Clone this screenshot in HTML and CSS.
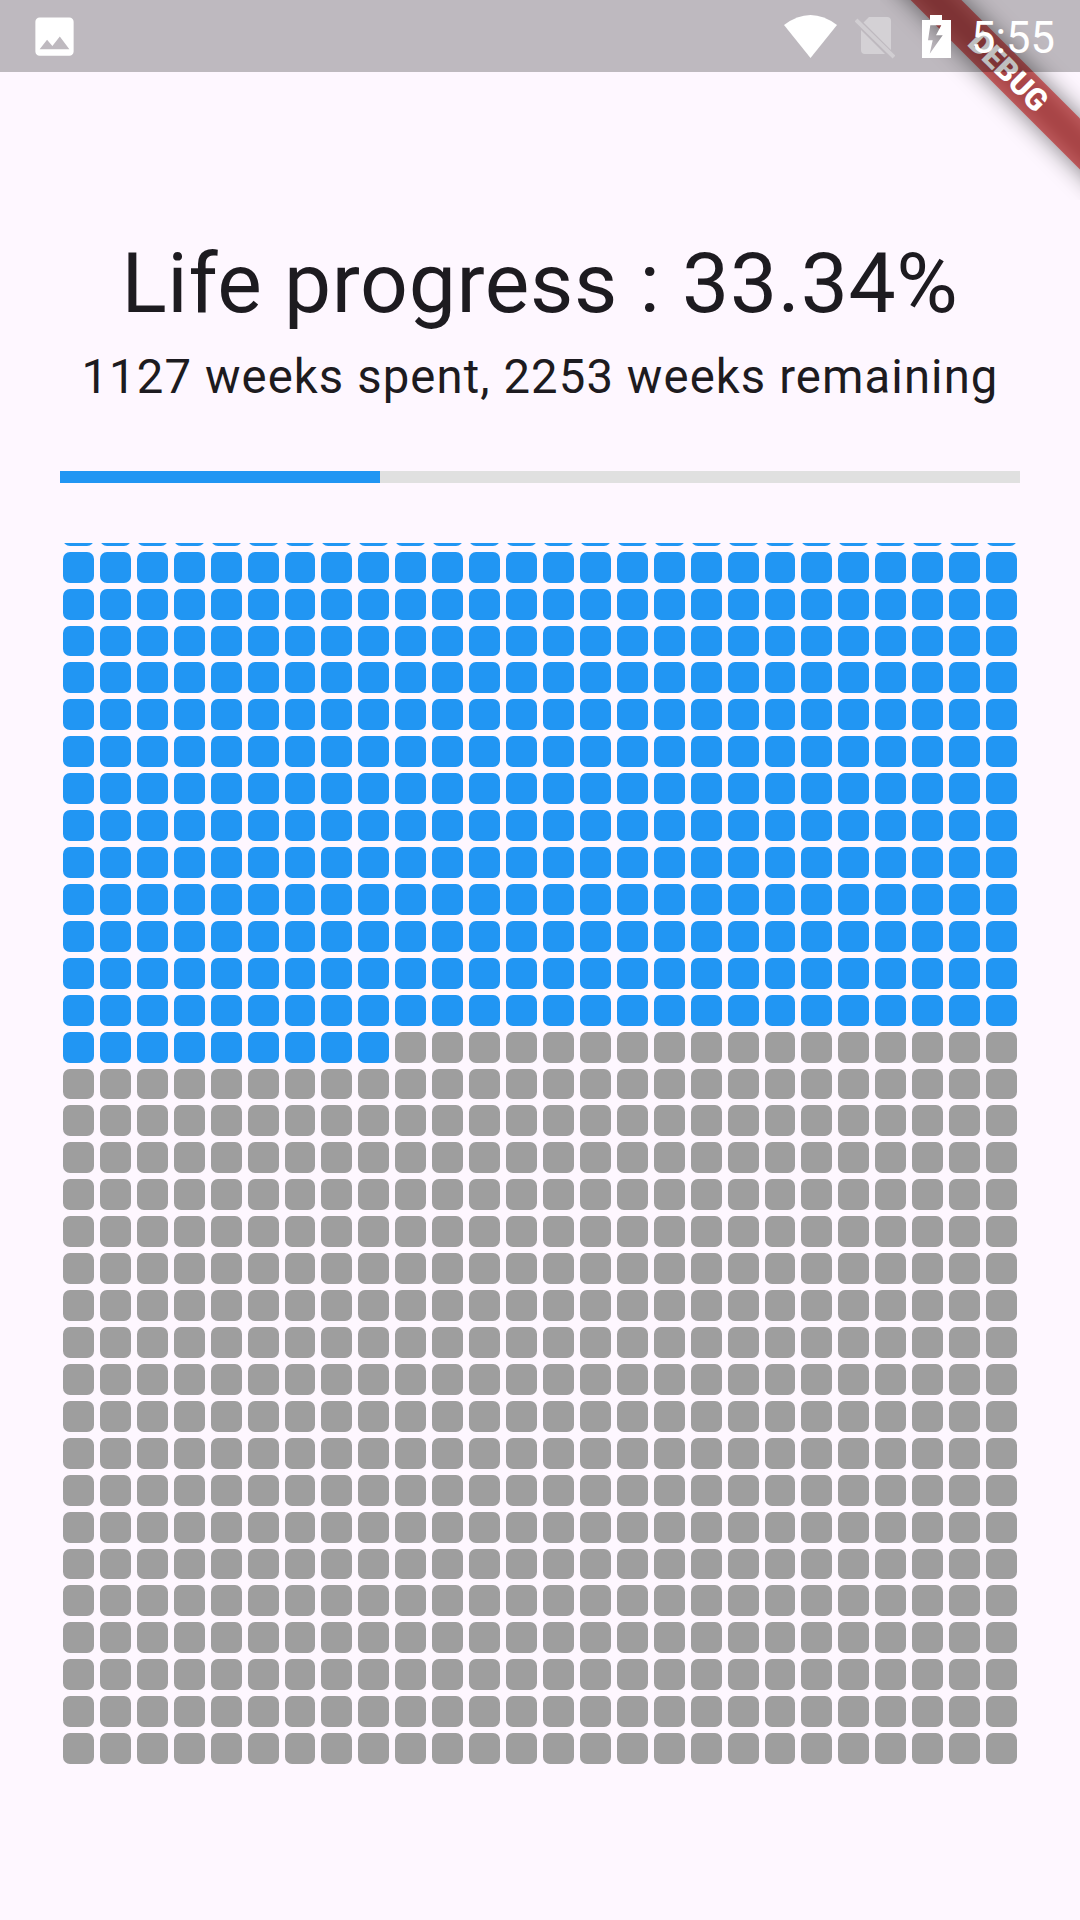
FILE: index.html
```html
<!DOCTYPE html>
<html lang="en">
<head>
  <meta charset="UTF-8" />
  <meta name="viewport" content="width=device-width, initial-scale=1.0" />
  <title>Life progress</title>
  <link rel="stylesheet" href="styles.css">
</head>
<body>
  <main class="screen">
    <section class="summary">
      <h1>Life progress : 33.34%</h1>
      <p>1127 weeks spent, 2253 weeks remaining</p>
    </section>
    <div class="progress"><div class="progress-fill" style="width: 33.34%"></div></div>
    <div class="weeks" id="weeks"></div>
  </main>

  <div class="banner"><span>DEBUG</span></div>

  <header class="statusbar">
    <svg class="icon-image" viewBox="0 0 24 24"><path fill-rule="evenodd" d="M21 19V5c0-1.100-.9-2-2-2H5c-1.100 0-2 .9-2 2v14c0 1.100.9 2 2 2h14c1.100 0 2-.9 2-2zM8.500 13.500l2.500 3.010L14.500 12l4.500 6H5l3.500-4.500z"/></svg>
    <div class="status-right">
      <svg class="icon-wifi" viewBox="0 0 53 43"><path d="M0 10Q26.500-10 53 10L26.500 43z"/></svg>
      <svg class="icon-sim" viewBox="0 0 40 44"><path d="M14 2H32a4 4 0 0 1 4 4V35L8.500 7.500zM6 15V35a4 4 0 0 0 4 4H30z"/><path class="sim-slash" d="M1 5 39 42"/></svg>
      <svg class="icon-battery" viewBox="0 0 29 43"><path fill-rule="evenodd" d="M8 0H20V5H29V43H0V5H8zM8.300 10.300H19.300L14 20.300H20.700L7.700 38.700 10.700 25.300H6z"/></svg>
      <span class="clock">5:55</span>
    </div>
  </header>

  <script src="weeks.js"></script>
</body>
</html>
```

FILE: styles.css
```css
body {
  margin: 0;
  width: 1080px;
  height: 1920px;
  overflow: hidden;
  position: relative;
  font-family: Roboto, sans-serif;
  background: #fef7ff;
  color: #1d1b20;
}
.screen {
  padding: 72px 60px 0;
}
.summary {
  padding-top: 164px;
  text-align: center;
}
.summary h1 {
  margin: 0;
  font-size: 84px;
  font-weight: 400;
  line-height: 96px;
  letter-spacing: 0.66px;
}
.summary p {
  margin: 0;
  padding-top: 15px;
  font-size: 47.25px;
  line-height: 60px;
  letter-spacing: 1.1px;
}
.progress {
  margin-top: 64px;
  height: 12px;
  background: #e0e0e0;
}
.progress-fill {
  height: 100%;
  background: #2196f3;
}
.weeks {
  margin-top: 60px;
  height: 1224px;
  overflow: hidden;
  display: grid;
  grid-template-columns: repeat(26, 1fr);
  grid-auto-rows: 36.923px;
}
.week {
  margin: 3px;
  border-radius: 7px;
  background: #9e9e9e;
}
.week.spent {
  background: #2196f3;
}

/* debug ribbon sits under the translucent status bar */
.banner {
  position: absolute;
  top: 0;
  right: 0;
  width: 200px;
  height: 200px;
  overflow: hidden;
}
.banner span {
  position: absolute;
  left: -32px;
  top: 54px;
  width: 320px;
  height: 36px;
  line-height: 36px;
  text-align: center;
  transform: rotate(45deg);
  background: rgba(183, 28, 28, 0.63);
  color: #fff;
  font-size: 30.6px;
  font-weight: 900;
}
.banner::before {
  content: "";
  position: absolute;
  left: -32px;
  top: 54px;
  width: 320px;
  height: 36px;
  transform: rotate(45deg);
  background: rgba(0, 0, 0, 0.5);
  filter: blur(12px);
}

.statusbar {
  position: absolute;
  top: 0;
  left: 0;
  right: 0;
  height: 72px;
  display: flex;
  align-items: center;
  justify-content: space-between;
  background: rgba(0, 0, 0, 0.25);
  fill: #fff;
  color: #fff;
}
.icon-image {
  width: 51px;
  height: 51px;
  margin-left: 29px;
}
.status-right {
  display: flex;
  align-items: center;
  padding-right: 25px;
}
.icon-wifi {
  width: 53px;
  height: 43px;
  margin-right: 18px;
}
.icon-sim {
  width: 40px;
  height: 44px;
  margin-top: 2px;
  margin-right: 27px;
  fill: rgba(255, 255, 255, 0.35);
}
.sim-slash {
  stroke: rgba(255, 255, 255, 0.3);
  stroke-width: 4;
}
.icon-battery {
  width: 29px;
  height: 43px;
  margin-right: 20px;
}
.clock {
  margin-top: 6px;
  font-size: 43.5px;
  line-height: 50px;
}
```

FILE: weeks.js
```js
const TOTAL = 3380;
const SPENT = 1127;

const box = document.getElementById('weeks');
for (let i = 0; i < TOTAL; i++) {
  const cell = document.createElement('div');
  cell.className = i < SPENT ? 'week spent' : 'week';
  box.appendChild(cell);
}
// the list is shown scrolled down by 30 rows
box.scrollTop = 1102;
```
